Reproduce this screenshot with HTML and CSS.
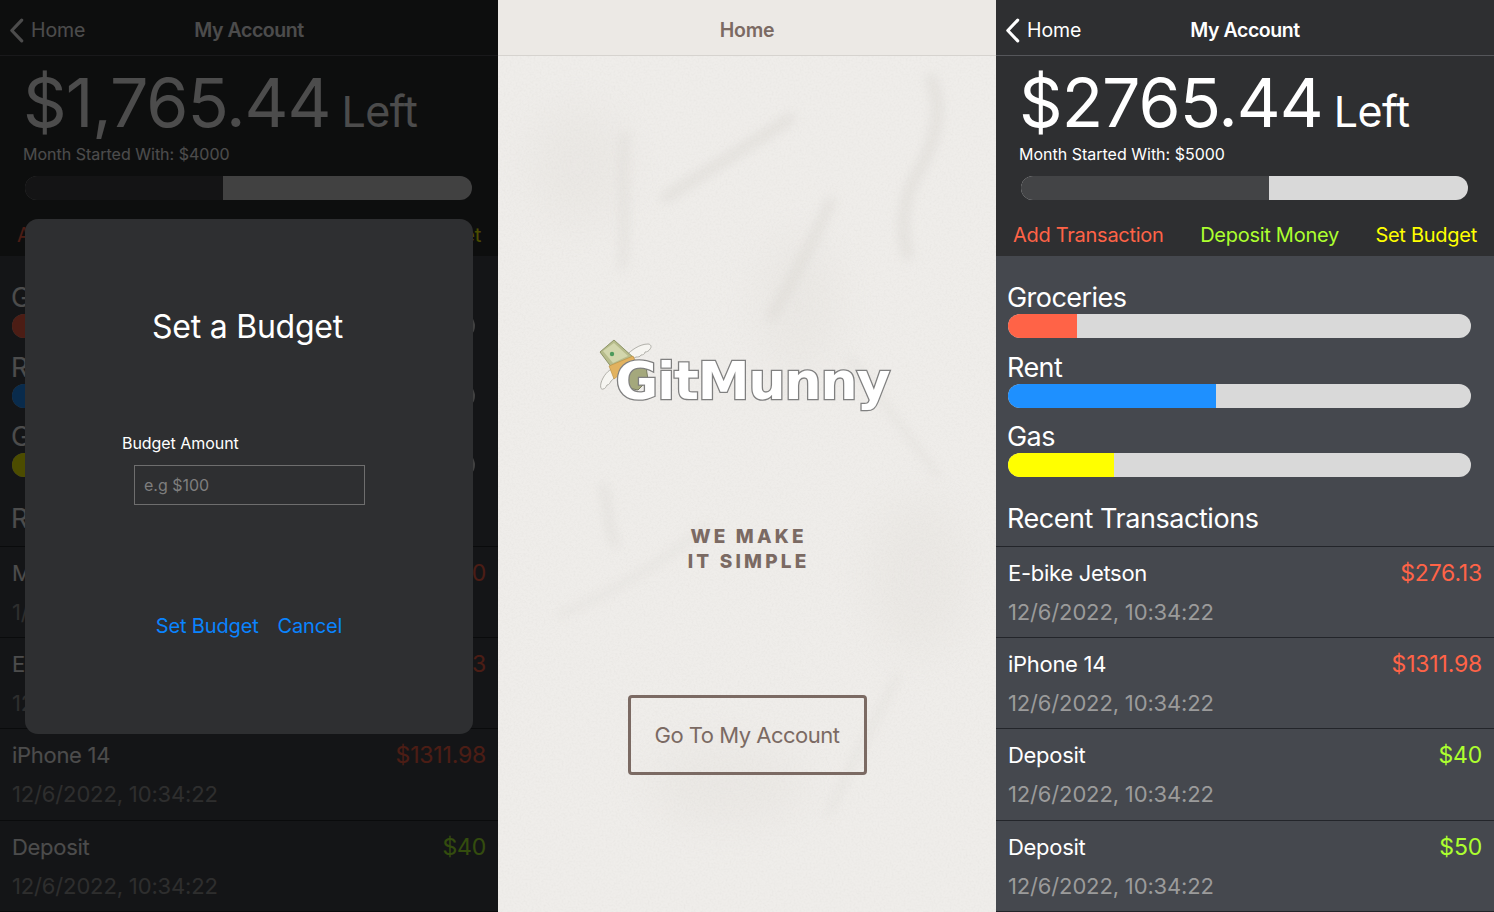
FILE: index.html
```html
<!DOCTYPE html>
<html lang="en">
<head>
<meta charset="utf-8">
<title>GitMunny</title>
<link rel="stylesheet" href="styles.css">
</head>
<body>
<div class="screens">

  <section class="phone account dimmed">
    <header class="topbar">
      <a class="back"><svg class="chev" viewBox="0 0 14 24"><path d="M12 2 2.500 12 12 22"/></svg>Home</a>
      <h1 class="title">My Account</h1>
    </header>
    <div class="summary">
      <p class="balance"><span class="amount">$1,765.44</span><span class="left">Left</span></p>
      <p class="started">Month Started With: $4000</p>
      <div class="bar big"><i class="spent" style="width:44.3%"></i></div>
      <nav class="actions"><a class="tomato">Add Transaction</a><a class="lime">Deposit Money</a><a class="yellow">Set Budget</a></nav>
    </div>
    <div class="budgets">
      <div class="cat"><h2>Groceries</h2><div class="bar"><i class="f-tomato" style="width:15%"></i></div></div>
      <div class="cat"><h2>Rent</h2><div class="bar"><i class="f-blue" style="width:45%"></i></div></div>
      <div class="cat"><h2>Gas</h2><div class="bar"><i class="f-yellow" style="width:23%"></i></div></div>
      <h2 class="recent">Recent Transactions</h2>
    </div>
    <ul class="tx">
      <li><div class="row"><span>MacBook</span><span class="tomato">$1000</span></div><time>1/6/2023</time></li>
      <li><div class="row"><span>E-bike Jetson</span><span class="tomato">$276.13</span></div><time>12/6/2022, 10:34:22</time></li>
      <li><div class="row"><span>iPhone 14</span><span class="tomato">$1311.98</span></div><time>12/6/2022, 10:34:22</time></li>
      <li><div class="row"><span>Deposit</span><span class="lime">$40</span></div><time>12/6/2022, 10:34:22</time></li>
    </ul>
    <div class="overlay"></div>
    <div class="modal">
      <h2 class="modal-title">Set a Budget</h2>
      <label class="field-label" for="amt">Budget Amount</label>
      <input class="field" id="amt" placeholder="e.g $100">
      <div class="modal-actions"><a>Set Budget</a><a>Cancel</a></div>
    </div>
  </section>

  <section class="phone home">
    <header class="home-bar"><h1>Home</h1></header>
    <main class="paper">
      <svg class="texture" viewBox="0 0 498 857" preserveAspectRatio="none" aria-hidden="true">
        <defs>
          <filter id="soft" x="-30%" y="-30%" width="160%" height="160%"><feGaussianBlur stdDeviation="6"/></filter>
          <filter id="softer" x="-30%" y="-30%" width="160%" height="160%"><feGaussianBlur stdDeviation="22"/></filter>
          <filter id="grain"><feTurbulence type="fractalNoise" baseFrequency=".5" numOctaves="3" seed="4"/><feColorMatrix values="0 0 0 0 .55  0 0 0 0 .53  0 0 0 0 .5  .5 .5 0 0 -.42"/></filter>
        </defs>
        <g fill="#e2dfda" filter="url(#softer)" opacity=".35">
          <ellipse cx="80" cy="110" rx="50" ry="60"/>
          <ellipse cx="420" cy="520" rx="50" ry="80"/>
          <ellipse cx="230" cy="730" rx="80" ry="40"/>
          <ellipse cx="300" cy="250" rx="40" ry="70"/>
        </g>
        <g fill="none" stroke="#dcd9d4" stroke-linecap="round" filter="url(#soft)" opacity=".7">
          <path d="M293 62C250 90 210 115 167 142" stroke-width="9"/>
          <path d="M127 78C122 120 130 165 124 212" stroke-width="6"/>
          <path d="M433 22C445 50 440 85 415 125 405 150 402 175 410 200" stroke-width="9"/>
          <path d="M333 145C315 185 295 225 273 262" stroke-width="8"/>
          <path d="M105 430C112 450 108 470 118 490" stroke-width="6"/>
          <path d="M60 560C110 540 160 510 210 470" stroke-width="4"/>
          <path d="M350 300C380 340 410 380 440 420" stroke-width="4"/>
          <path d="M400 620C375 670 350 715 330 760" stroke-width="4"/>
        </g>
        <rect width="498" height="857" filter="url(#grain)" opacity=".32"/>
      </svg>
      <div class="logo">
        <svg class="logo-mark" viewBox="590 330 70 80" aria-hidden="true">
          <path d="M626 356c5-6 14-12 22-12 3 0 4 3 2 5-1 2-3 3-5 3 0 2-2 3-4 3-1 2-3 2-5 2-3 2-7 2-10-1z" fill="#f6f5f1" stroke="#a9a8a1" stroke-width=".9"/>
          <path d="M614 368c-6 2-11 8-13 15-1 4 0 7 2 6 2 0 3-2 4-4 2 0 3-2 4-4 2-1 3-3 4-5 2-2 3-4 4-6z" fill="#f6f5f1" stroke="#a9a8a1" stroke-width=".9"/>
          <path d="M600 352 614 340 634 358 612 368z" fill="#b7bc8b" stroke="#8d9468" stroke-width="1"/>
          <path d="M603 351 614 343 628 356 613 363z" fill="#d2d6ac"/>
          <circle cx="612" cy="354" r="2.200" fill="#4d9a5b"/>
          <path d="M609 366 633 356 637 364 618 376 614 379z" fill="#e2b25f" stroke="#b98d3f" stroke-width=".6"/>
          <path d="M628 368 646 366 648 380 638 390 628 388z" fill="#a4a87c" stroke="#666a4e" stroke-width=".8"/>
        </svg>
        <span class="logo-text">GitMunny</span>
      </div>
      <p class="slogan">WE MAKE<br>IT SIMPLE</p>
      <a class="cta">Go To My Account</a>
    </main>
  </section>

  <section class="phone account">
    <header class="topbar">
      <a class="back"><svg class="chev" viewBox="0 0 14 24"><path d="M12 2 2.500 12 12 22"/></svg>Home</a>
      <h1 class="title">My Account</h1>
    </header>
    <div class="summary">
      <p class="balance"><span class="amount">$2765.44</span><span class="left">Left</span></p>
      <p class="started">Month Started With: $5000</p>
      <div class="bar big"><i class="spent" style="width:55.4%"></i></div>
      <nav class="actions"><a class="tomato">Add Transaction</a><a class="lime">Deposit Money</a><a class="yellow">Set Budget</a></nav>
    </div>
    <div class="budgets">
      <div class="cat"><h2>Groceries</h2><div class="bar"><i class="f-tomato" style="width:15%"></i></div></div>
      <div class="cat"><h2>Rent</h2><div class="bar"><i class="f-blue" style="width:45%"></i></div></div>
      <div class="cat"><h2>Gas</h2><div class="bar"><i class="f-yellow" style="width:23%"></i></div></div>
      <h2 class="recent">Recent Transactions</h2>
    </div>
    <ul class="tx">
      <li><div class="row"><span>E-bike Jetson</span><span class="tomato">$276.13</span></div><time>12/6/2022, 10:34:22</time></li>
      <li><div class="row"><span>iPhone 14</span><span class="tomato">$1311.98</span></div><time>12/6/2022, 10:34:22</time></li>
      <li><div class="row"><span>Deposit</span><span class="lime">$40</span></div><time>12/6/2022, 10:34:22</time></li>
      <li><div class="row"><span>Deposit</span><span class="lime">$50</span></div><time>12/6/2022, 10:34:22</time></li>
    </ul>
  </section>

</div>
</body>
</html>
```

FILE: styles.css
```css
* { box-sizing: border-box; }
html, body { margin: 0; padding: 0; background: #000; }
body { font-family: Inter, "Liberation Sans", sans-serif; color: #fff; }
h1, h2, p, ul { margin: 0; padding: 0; font-weight: 400; }
ul { list-style: none; }

.screens { display: flex; width: 1494px; height: 912px; overflow: hidden; }
.phone { position: relative; width: 498px; height: 912px; flex: none; overflow: hidden; display: flex; flex-direction: column; }

/* account */
.account { background: #45484e; }
.topbar { height: 56px; flex: none; background: #2e2f31; border-bottom: 1px solid #55565a; display: flex; align-items: center; justify-content: center; position: relative; }
.back { position: absolute; left: 9px; top: 17px; display: flex; align-items: center; gap: 7px; font-size: 19.500px; line-height: 26px; letter-spacing: -.1px; color: #fff; }
.chev { width: 15px; height: 25px; fill: none; stroke: #fff; stroke-width: 3; stroke-linecap: round; stroke-linejoin: round; }
.title { font-size: 19.500px; font-weight: 600; line-height: 26px; letter-spacing: -.45px; margin-top: 4px; }

.summary { height: 200px; flex: none; background: #2e2f31; padding-top: 7px; display: flex; flex-direction: column; }
.balance { display: flex; align-items: baseline; gap: 11px; padding-left: 23px; height: 80px; line-height: 78px; }
.amount { font-size: 68px; letter-spacing: -1px; }
.left { font-size: 43px; letter-spacing: -.5px; }
.started { padding-left: 23px; font-size: 16px; line-height: 22px; letter-spacing: 0; }
.bar { height: 24px; border-radius: 12px; background: #d9d9d9; overflow: hidden; }
.bar i { display: block; height: 100%; }
.big { margin: 11px 26px 0 25px; }
.spent { background: #434446; }
.actions { display: flex; justify-content: space-between; padding: 0 17px 0 17px; margin-top: 22px; font-size: 20px; line-height: 26px; letter-spacing: -.27px; }
.tomato { color: #ff6347; }
.lime { color: #adff2f; }
.yellow { color: #ffff00; }
.f-tomato { background: #ff6347; }
.f-blue { background: #1e90ff; }
.f-yellow { background: #ffff00; }

.budgets { flex: none; height: 291px; padding: 25px 23px 0 12px; border-bottom: 1px solid #23252a; }
.cat { height: 69.500px; }
.cat h2 { font-size: 27px; line-height: 33px; letter-spacing: -.55px; margin-left: -1px; }
.recent { font-size: 27px; line-height: 34px; letter-spacing: -.45px; margin: 12px -20px 0 -1px; }

.tx { flex: none; }
.tx li { height: 91.200px; padding: 10px 12px 0; border-bottom: 1px solid #23252a; }
.row { display: flex; justify-content: space-between; font-size: 22px; line-height: 32px; letter-spacing: -.3px; }
.row span + span { font-size: 23px; letter-spacing: -.2px; }
.tx time { display: block; margin-top: 7px; font-size: 22px; line-height: 32px; letter-spacing: -.15px; color: #9b9b9b; }

/* dimmed state with a modal */
.overlay { position: absolute; inset: 0; background: rgba(0, 0, 0, .7); }
.modal { position: absolute; left: 25px; top: 219px; width: 448px; height: 515px; border-radius: 13px; background: #2e2f31; display: flex; flex-direction: column; align-items: center; }
.modal-title { margin: 88px 3px 0 0; font-size: 32px; line-height: 40px; letter-spacing: -.25px; }
.field-label { align-self: flex-start; margin: 85px 0 0 97px; font-size: 16px; line-height: 22px; letter-spacing: -.05px; }
.field { width: 231px; height: 40px; margin: 11px 0 0 1px; padding: 0 9px; background: transparent; border: 1.500px solid #6e6e6e; border-radius: 0; font: inherit; font-size: 16px; color: #fff; }
.field::placeholder { color: #7e7e7e; opacity: 1; }
.modal-actions { display: flex; gap: 19px; margin-top: 107px; font-size: 20px; line-height: 28px; letter-spacing: -.15px; color: #0a84ff; }

/* home */
.home { background: #efedea; color: #7b6a63; }
.home-bar { height: 56px; flex: none; background: #ece9e5; border-bottom: 1px solid #d6d3cf; display: flex; align-items: center; justify-content: center; position: relative; z-index: 1; }
.home-bar h1 { font-size: 19.500px; line-height: 26px; font-weight: 600; letter-spacing: -.25px; margin-top: 4px; }
.paper { position: relative; flex: 1; display: flex; flex-direction: column; align-items: center; background: #efedea; }
.texture { position: absolute; inset: 0; width: 100%; height: 100%; }
.logo { position: relative; margin-top: 289.500px; height: 70px; display: flex; justify-content: center; width: 100%; }
.logo-text { position: relative; font-family: "DejaVu Sans", sans-serif; font-weight: 700; font-size: 52px; line-height: 70px; letter-spacing: -1px; color: #fff; -webkit-text-stroke: 2.600px #808080; paint-order: stroke fill; margin-left: 11px; }
.logo-mark { position: absolute; left: 92px; top: -15.500px; width: 70px; height: 80px; }
.slogan { position: relative; margin-top: 108px; padding-left: 3.200px; font-weight: 800; font-size: 19px; line-height: 25px; letter-spacing: 3.200px; text-align: center; color: #7b6a63; }
.cta { position: relative; margin-top: 121.500px; width: 239px; height: 80px; border: 3px solid #7b6a63; border-radius: 4px; display: flex; align-items: center; justify-content: center; font-size: 22px; letter-spacing: -.5px; color: #7b6a63; }
```
